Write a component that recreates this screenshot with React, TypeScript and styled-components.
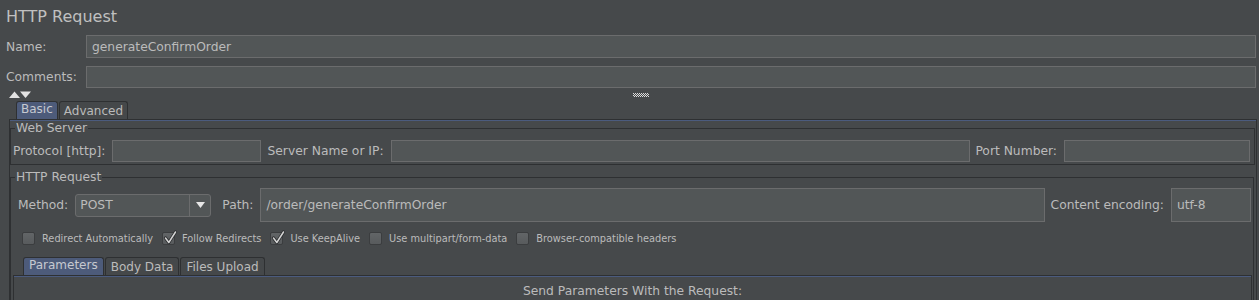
import React from "react";
import styled, { createGlobalStyle } from "styled-components";

const C = {
  bg: "#46494b",
  field: "#525657",
  fieldBorder: "#6b6c6d",
  text: "#bbbbbb",
  dark: "#2e3032",
  blue: "#4d5b7a",
  blueLine: "#4b5b7e",
};

const Global = createGlobalStyle`
  html, body { margin: 0; padding: 0; background: ${C.bg}; }
  body {
    font-family: "DejaVu Sans", "Noto Sans", sans-serif;
    font-size: 12.3px;
    color: ${C.text};
  }
  #root { height: 300px; overflow: hidden; }
`;

const Page = styled.div`
  width: 1259px;
  box-sizing: border-box;
`;

const Title = styled.div`
  height: 34px;
  line-height: 34px;
  padding-left: 6px;
  font-size: 16px;
  color: #c0c0c0;
`;

const FormRow = styled.div<{ $h: number; $mt: number }>`
  display: flex;
  align-items: center;
  height: ${(p) => p.$h}px;
  margin-top: ${(p) => p.$mt}px;
  padding: 0 3px 0 6px;
`;

const RowLabel = styled.div`
  width: 80px;
  flex: none;
  white-space: nowrap;
`;

const Field = styled.div<{ $w?: number }>`
  box-sizing: border-box;
  height: 100%;
  ${(p) => (p.$w ? `width: ${p.$w}px; flex: none;` : `flex: 1; min-width: 0;`)}
  background: ${C.field};
  border: 1px solid ${C.fieldBorder};
  padding-left: 5px;
  display: flex;
  align-items: center;
  white-space: nowrap;
`;

const SplitRow = styled.div`
  display: flex;
  align-items: center;
  height: 13px;
  padding-left: 9px;
`;

const Grip = styled.svg`
  margin-left: 600px;
  display: block;
`;

const TabStrip = styled.div<{ $pl: number }>`
  display: flex;
  align-items: flex-end;
  height: 18px;
  padding-left: ${(p) => p.$pl}px;
`;

const Tab = styled.div<{ $active?: boolean; $pad: number }>`
  box-sizing: border-box;
  height: 18px;
  padding: 0 ${(p) => p.$pad}px ${(p) => (p.$active ? 3 : 0)}px;
  margin-right: 1px;
  display: flex;
  align-items: center;
  font-size: 12px;
  border: 1px solid ${C.dark};
  border-bottom: none;
  border-radius: 3px 3px 0 0;
  background: ${(p) => (p.$active ? C.blue : "#45484a")};
  color: ${(p) => (p.$active ? "#c6c9d0" : C.text)};
  white-space: nowrap;
`;

const Panel = styled.div<{ $ml: number; $mr: number }>`
  margin-left: ${(p) => p.$ml}px;
  margin-right: ${(p) => p.$mr}px;
  border: 1px solid ${C.dark};
  border-bottom: none;
  box-shadow: inset 0 1px 0 ${C.blueLine};
  padding-top: 1px;
`;

const Group = styled.fieldset<{ $mt: number; $mr: number }>`
  margin: ${(p) => p.$mt}px ${(p) => p.$mr}px 0 0;
  padding: 0;
  min-width: 0;
  border: 1px solid ${C.dark};
`;

const Legend = styled.legend`
  margin-left: 4px;
  padding: 0 1px;
  line-height: 14px;
`;

const GroupRow = styled.div<{ $pad: string; $h: number }>`
  display: flex;
  align-items: center;
  padding: ${(p) => p.$pad};
  height: ${(p) => p.$h}px;
`;

const InlineLabel = styled.div<{ $gap?: number }>`
  flex: none;
  white-space: nowrap;
  margin-right: 7px;
  margin-left: ${(p) => p.$gap ?? 0}px;
`;

const Select = styled.div`
  box-sizing: border-box;
  width: 136px;
  height: 23px;
  flex: none;
  display: flex;
  background: ${C.field};
  border: 1px solid ${C.fieldBorder};
  border-radius: 3px;
`;

const SelectValue = styled.div`
  flex: 1;
  padding-left: 4px;
  display: flex;
  align-items: center;
`;

const SelectButton = styled.div`
  width: 20px;
  border-left: 1px solid ${C.fieldBorder};
  display: flex;
  align-items: center;
  justify-content: center;
`;

const CheckRow = styled.div`
  display: flex;
  align-items: center;
  height: 15px;
  margin-top: 9px;
  padding-left: 11px;
  font-size: 9.8px;
`;

const CheckItem = styled.label`
  display: flex;
  align-items: center;
  gap: 7px;
  margin-right: 9px;
  white-space: nowrap;
`;

const Box = styled.span`
  position: relative;
  box-sizing: border-box;
  width: 13px;
  height: 13px;
  border: 1px solid #3b3d3f;
  border-radius: 2px;
  background: linear-gradient(#626567, #585b5d);
`;

const CheckMark = styled.svg`
  position: absolute;
  left: -1px;
  top: -3px;
`;

const SubTabs = styled.div`
  margin-top: 11px;
`;

const CenterNote = styled.div`
  text-align: center;
  line-height: 14px;
  padding-top: 7px;
  height: 40px;
`;

function Check({ checked, label }: { checked?: boolean; label: string }) {
  return (
    <CheckItem>
      <Box>
        {checked && (
          <CheckMark width="16" height="16" viewBox="0 0 16 16">
            <path d="M3.5 8 L6.8 12.5 L13.5 2" fill="none" stroke="#2a2c2e" strokeWidth="3.2" strokeLinejoin="round" strokeLinecap="round" />
            <path d="M3.5 8 L6.8 12.5 L13.5 2" fill="none" stroke="#d4d4d4" strokeWidth="1.5" strokeLinejoin="round" strokeLinecap="round" />
          </CheckMark>
        )}
      </Box>
      {label}
    </CheckItem>
  );
}

function GripIcon() {
  const dots: React.ReactNode[] = [];
  for (let y = 0; y < 4; y++) {
    for (let x = 0; x < 16; x++) {
      if ((x + y) % 2 === 0) dots.push(<rect key={`${x}-${y}`} x={x} y={y} width="1" height="1" fill="#dcdcdc" />);
    }
  }
  return (
    <Grip width="16" height="4" viewBox="0 0 16 4">
      {dots}
    </Grip>
  );
}

export default function App() {
  return (
    <Page>
      <Global />
      <Title>HTTP Request</Title>
      <FormRow $h={23} $mt={1}>
        <RowLabel>Name:</RowLabel>
        <Field>generateConfirmOrder</Field>
      </FormRow>
      <FormRow $h={22} $mt={8}>
        <RowLabel>Comments:</RowLabel>
        <Field />
      </FormRow>
      <SplitRow>
        <svg width="24" height="8" viewBox="0 0 24 8">
          <polygon points="0,7 5.5,0.5 11,7" fill="#e2e2e2" />
          <polygon points="11,0.5 22,0.5 16.5,7" fill="#e2e2e2" />
        </svg>
        <GripIcon />
      </SplitRow>
      <TabStrip $pl={16}>
        <Tab $active $pad={4}>Basic</Tab>
        <Tab $pad={4}>Advanced</Tab>
      </TabStrip>
      <Panel $ml={9} $mr={2}>
        <Group $mt={0} $mr={1}>
          <Legend>Web Server</Legend>
          <GroupRow $pad="5px 4px 2px 2px" $h={22}>
            <InlineLabel>Protocol [http]:</InlineLabel>
            <Field $w={149} />
            <InlineLabel $gap={6}>Server Name or IP:</InlineLabel>
            <Field />
            <InlineLabel $gap={5}>Port Number:</InlineLabel>
            <Field $w={186} />
          </GroupRow>
        </Group>
        <Group $mt={5} $mr={2}>
          <Legend>HTTP Request</Legend>
          <GroupRow $pad="4px 2px 0 7px" $h={34}>
            <InlineLabel>Method:</InlineLabel>
            <Select>
              <SelectValue>POST</SelectValue>
              <SelectButton>
                <svg width="9" height="6" viewBox="0 0 9 6">
                  <polygon points="0,0 9,0 4.5,6" fill="#e6e6e6" />
                </svg>
              </SelectButton>
            </Select>
            <InlineLabel $gap={11}>Path:</InlineLabel>
            <Field>/order/generateConfirmOrder</Field>
            <InlineLabel $gap={6}>Content encoding:</InlineLabel>
            <Field $w={80}>utf-8</Field>
          </GroupRow>
          <CheckRow>
            <Check label="Redirect Automatically" />
            <Check checked label="Follow Redirects" />
            <Check checked label="Use KeepAlive" />
            <Check label="Use multipart/form-data" />
            <Check label="Browser-compatible headers" />
          </CheckRow>
          <SubTabs>
            <TabStrip $pl={12}>
              <Tab $active $pad={5}>Parameters</Tab>
              <Tab $pad={5}>Body Data</Tab>
              <Tab $pad={5}>Files Upload</Tab>
            </TabStrip>
            <Panel $ml={2} $mr={1}>
              <CenterNote>Send Parameters With the Request:</CenterNote>
            </Panel>
          </SubTabs>
        </Group>
      </Panel>
    </Page>
  );
}
